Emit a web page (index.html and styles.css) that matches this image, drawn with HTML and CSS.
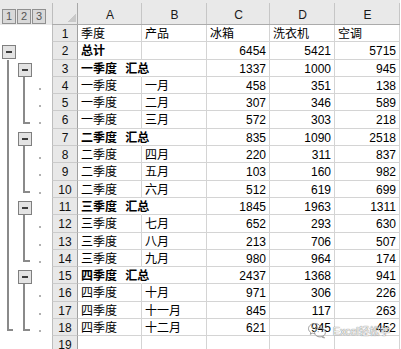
FILE: index.html
```html
<!DOCTYPE html>
<html lang="zh-CN">
<head>
<meta charset="utf-8">
<title>分级显示</title>
<link rel="stylesheet" href="styles.css">
</head>
<body>
<div class="app">
  <div class="outline">
    <div class="levels"><span class="lv">1</span><span class="lv">2</span><span class="lv">3</span></div>
    <div class="ob b1"></div>
    <div class="ln ln1"></div>
    <div class="ob b2 q1"></div><div class="ln ln2 q1"></div><div class="dots q1"><i></i><i></i><i></i></div>
    <div class="ob b2 q2"></div><div class="ln ln2 q2"></div><div class="dots q2"><i></i><i></i><i></i></div>
    <div class="ob b2 q3"></div><div class="ln ln2 q3"></div><div class="dots q3"><i></i><i></i><i></i></div>
    <div class="ob b2 q4"></div><div class="ln ln2 q4"></div><div class="dots q4"><i></i><i></i><i></i></div>
  </div>
  <div class="sheet">
    <div class="corner"></div><div class="ch">A</div><div class="ch">B</div><div class="ch">C</div><div class="ch">D</div><div class="ch">E</div>

    <div class="rh">1</div><div class="c">季度</div><div class="c">产品</div><div class="c">冰箱</div><div class="c">洗衣机</div><div class="c">空调</div>
    <div class="rh">2</div><div class="c b">总计</div><div class="c"></div><div class="c n">6454</div><div class="c n">5421</div><div class="c n">5715</div>
    <div class="rh">3</div><div class="c b sp">一季度 汇总</div><div class="c"></div><div class="c n">1337</div><div class="c n">1000</div><div class="c n">945</div>
    <div class="rh">4</div><div class="c">一季度</div><div class="c">一月</div><div class="c n">458</div><div class="c n">351</div><div class="c n">138</div>
    <div class="rh">5</div><div class="c">一季度</div><div class="c">二月</div><div class="c n">307</div><div class="c n">346</div><div class="c n">589</div>
    <div class="rh">6</div><div class="c">一季度</div><div class="c">三月</div><div class="c n">572</div><div class="c n">303</div><div class="c n">218</div>
    <div class="rh">7</div><div class="c b sp">二季度 汇总</div><div class="c"></div><div class="c n">835</div><div class="c n">1090</div><div class="c n">2518</div>
    <div class="rh">8</div><div class="c">二季度</div><div class="c">四月</div><div class="c n">220</div><div class="c n">311</div><div class="c n">837</div>
    <div class="rh">9</div><div class="c">二季度</div><div class="c">五月</div><div class="c n">103</div><div class="c n">160</div><div class="c n">982</div>
    <div class="rh">10</div><div class="c">二季度</div><div class="c">六月</div><div class="c n">512</div><div class="c n">619</div><div class="c n">699</div>
    <div class="rh">11</div><div class="c b sp">三季度 汇总</div><div class="c"></div><div class="c n">1845</div><div class="c n">1963</div><div class="c n">1311</div>
    <div class="rh">12</div><div class="c">三季度</div><div class="c">七月</div><div class="c n">652</div><div class="c n">293</div><div class="c n">630</div>
    <div class="rh">13</div><div class="c">三季度</div><div class="c">八月</div><div class="c n">213</div><div class="c n">706</div><div class="c n">507</div>
    <div class="rh">14</div><div class="c">三季度</div><div class="c">九月</div><div class="c n">980</div><div class="c n">964</div><div class="c n">174</div>
    <div class="rh">15</div><div class="c b sp">四季度 汇总</div><div class="c"></div><div class="c n">2437</div><div class="c n">1368</div><div class="c n">941</div>
    <div class="rh">16</div><div class="c">四季度</div><div class="c">十月</div><div class="c n">971</div><div class="c n">306</div><div class="c n">226</div>
    <div class="rh">17</div><div class="c">四季度</div><div class="c">十一月</div><div class="c n">845</div><div class="c n">117</div><div class="c n">263</div>
    <div class="rh">18</div><div class="c">四季度</div><div class="c">十二月</div><div class="c n">621</div><div class="c n">945</div><div class="c n">452</div>
    <div class="rh">19</div><div class="c"></div><div class="c"></div><div class="c"></div><div class="c"></div><div class="c"></div>
  </div>
  <div class="wm">
    <svg class="wm-icon" width="20" height="17" viewBox="0 0 20 17">
      <path d="M8 1.5C4.4 1.5 1.5 3.8 1.5 6.6c0 1.6 .9 3 2.3 3.9L3.3 12.3l2.1-1.1c.8.2 1.7.4 2.6.4" fill="none" stroke="#9a9a9a" stroke-width="1"/>
      <path d="M14.3 6.2C13.4 3.5 11 1.5 8 1.5" fill="none" stroke="#9a9a9a" stroke-width="1"/>
      <ellipse cx="13" cy="10.6" rx="5.4" ry="4.3" fill="none" stroke="#9a9a9a" stroke-width="1"/>
      <path d="M16.2 14.4l1.3 1.6-2.6-.9" fill="none" stroke="#9a9a9a" stroke-width="1"/>
      <circle cx="5.6" cy="5.2" r=".8" fill="#9a9a9a"/>
      <circle cx="10" cy="5.2" r=".8" fill="#9a9a9a"/>
      <circle cx="11.2" cy="9.6" r=".6" fill="#9a9a9a"/>
      <circle cx="14.8" cy="9.6" r=".6" fill="#9a9a9a"/>
    </svg>
    <span class="wm-text">Excel轻松学</span>
  </div>
</div>
</body>
</html>
```
FILE: styles.css
```css
html, body {
  margin: 0;
  padding: 0;
  background: #fff;
}
body {
  font-family: "Liberation Sans", "Noto Sans CJK SC", sans-serif;
  font-size: 12px;
  color: #000;
  overflow: hidden;
}
.app {
  position: relative;
  display: flex;
  width: 401px;
  height: 349px;
  overflow: hidden;
}

/* ---------- outline (grouping) panel ---------- */
.outline {
  flex: 0 0 52px;
  display: grid;
  grid-template-columns: 17px 16px 19px;
  grid-template-rows: 25px repeat(19, 17.3px);
}
.levels {
  grid-row: 1;
  grid-column: 1 / -1;
  background: #e9e9e9;
  display: flex;
  align-items: flex-start;
  gap: 1px;
  padding: 9px 0 0 2px;
}
.lv {
  width: 14px;
  height: 15px;
  box-sizing: border-box;
  border: 1px solid #909090;
  background: #d9d9d9;
  color: #555;
  font-size: 11px;
  line-height: 13px;
  text-align: center;
}
.ob {
  width: 14px;
  height: 14px;
  box-sizing: border-box;
  margin-top: 3px;
  border: 1px solid #7f7f7f;
  background: linear-gradient(#3c3c3c, #3c3c3c) center / 6px 2px no-repeat #e3e3e3;
}
.b1 { grid-column: 1; grid-row: 3; margin-left: 2px; }
.b2 { grid-column: 2; margin-left: 1px; }
.b2.q1 { grid-row: 4; }
.b2.q2 { grid-row: 8; }
.b2.q3 { grid-row: 12; }
.b2.q4 { grid-row: 16; }

.ln {
  border-left: 2px solid #8a8a8a;
  border-bottom: 2px solid #8a8a8a;
  margin-bottom: 5px;
}
.ln1 { grid-column: 1; grid-row: 4 / 20; margin-left: 7px; width: 4px; }
.ln2 { grid-column: 2; margin-left: 6px; width: 5px; }
.dots { grid-column: 3; display: grid; grid-auto-rows: 17.3px; }
.ln2.q1, .dots.q1 { grid-row: 5 / 8; }
.ln2.q2, .dots.q2 { grid-row: 9 / 12; }
.ln2.q3, .dots.q3 { grid-row: 13 / 16; }
.ln2.q4, .dots.q4 { grid-row: 17 / 20; }
.dots i {
  display: block;
  background: linear-gradient(#b0b0b0, #b0b0b0) 6px 11px / 2px 2px no-repeat;
}

/* ---------- sheet grid ---------- */
.sheet {
  display: grid;
  grid-template-columns: 26px 64px 65px 63px 65px 65px;
  grid-template-rows: 25px repeat(19, 17.3px);
}
.corner {
  background:
    linear-gradient(to bottom right, transparent 50%, #c9c9c9 50%) right 2px bottom 2px / 9px 9px no-repeat,
    linear-gradient(#bdbdbd, #bdbdbd) left bottom / 1px 21px no-repeat,
    linear-gradient(#a8a8a8, #a8a8a8) right bottom / 1px 21px no-repeat,
    #e9e9e9;
  border-bottom: 1px solid #ababab;
}
.ch {
  background: linear-gradient(#c6c6c6, #c6c6c6) right bottom / 1px 21px no-repeat #e9e9e9;
  border-bottom: 1px solid #ababab;
  text-align: center;
  padding-top: 7px;
  line-height: 17px;
  color: #1a1a1a;
}
.rh {
  background: #e8e8e8;
  border-left: 1px solid #bdbdbd;
  border-right: 1px solid #a0a0a0;
  border-bottom: 1px solid #cbcbcb;
  text-align: center;
  padding-top: 2px;
  line-height: 15px;
  color: #111;
}
.c {
  border-right: 1px solid #d4d4d4;
  border-bottom: 1px solid #d4d4d4;
  padding: 2px 3px 0 3px;
  line-height: 15px;
  white-space: pre;
  min-width: 0;
}
.n { text-align: right; }
.b { font-weight: bold; }
.sp {
  border-right-color: transparent;
  word-spacing: 5px;
}

/* ---------- watermark ---------- */
.wm {
  position: absolute;
  left: 307px;
  top: 322px;
  display: flex;
  align-items: center;
  gap: 6px;
}
.wm-icon { display: block; }
.wm-text {
  font-size: 10.5px;
  line-height: 14px;
  color: rgba(255, 255, 255, 0.92);
  text-shadow: 0 0 1px rgba(0, 0, 0, 0.55), 0 0 1px rgba(0, 0, 0, 0.35);
}
```
